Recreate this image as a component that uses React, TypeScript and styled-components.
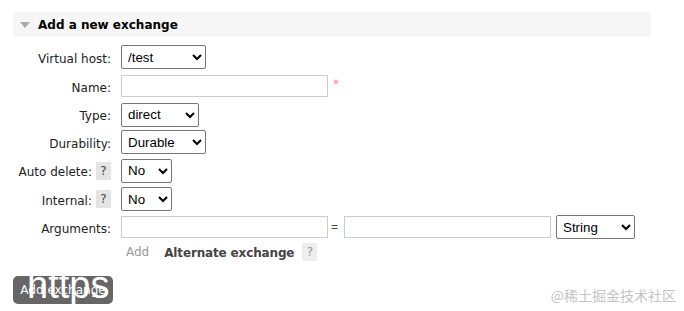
import React from 'react';
import styled, { createGlobalStyle } from 'styled-components';

const GlobalStyle = createGlobalStyle`
  html, body {
    margin: 0;
    padding: 0;
    background: #fff;
  }
  body {
    font-family: "DejaVu Sans", Verdana, sans-serif;
    font-size: 12px;
    color: #222;
  }
`;

const Page = styled.div`
  position: relative;
  width: 684px;
  height: 311px;
  padding: 12px 0 0 13px;
  box-sizing: border-box;
  overflow: hidden;
`;

const SectionHeader = styled.div`
  display: flex;
  align-items: center;
  gap: 8px;
  width: 638px;
  height: 25px;
  padding-left: 7px;
  box-sizing: border-box;
  background: #f6f6f6;
`;

const Arrow = styled.span`
  width: 0;
  height: 0;
  border-left: 5px solid transparent;
  border-right: 5px solid transparent;
  border-top: 6px solid #aaa;
  margin-top: 1px;
`;

const Title = styled.h2`
  margin: 0;
  font-size: 12px;
  font-weight: bold;
  color: #000;
`;

const Form = styled.div`
  display: flex;
  flex-direction: column;
  margin-top: 6px;
`;

const Row = styled.div<{ $height?: number }>`
  display: grid;
  grid-template-columns: 98px auto;
  column-gap: 10px;
  align-items: center;
  height: ${(p) => p.$height ?? 28}px;
`;

const Label = styled.label`
  display: flex;
  align-items: center;
  justify-content: flex-end;
  gap: 4px;
  padding-top: 3px;
  color: #222;
  white-space: nowrap;
`;

const Help = styled.span<{ $light?: boolean }>`
  display: inline-flex;
  align-items: center;
  justify-content: center;
  width: 15px;
  height: 18px;
  margin-top: -3px;
  background: ${(p) => (p.$light ? '#eee' : '#e4e4e4')};
  color: ${(p) => (p.$light ? '#999' : '#444')};
  font-weight: normal;
  font-size: 12px;
`;

const Controls = styled.div`
  display: flex;
  align-items: center;
  gap: 5px;
`;

const Select = styled.select<{ $width: number }>`
  width: ${(p) => p.$width}px;
  height: 24px;
  font-family: "Liberation Sans", Arial, sans-serif;
  font-size: 13.33px;
  color: #000;
  background: #fff;
  border: 1px solid #767676;
  border-radius: 2px;
  padding: 0 2px;
`;

const TextInput = styled.input`
  width: 207px;
  height: 22px;
  box-sizing: border-box;
  border: 1px solid #ccc;
  background: #fff;
  padding: 0 4px;
  font-family: "Liberation Sans", Arial, sans-serif;
`;

const Required = styled.span`
  color: #f88;
  font-size: 12px;
  align-self: flex-start;
  margin-top: 2px;
`;

const Equals = styled.span`
  font-family: "Liberation Sans", Arial, sans-serif;
  color: #444;
  font-size: 12px;
  margin-left: -2px;
  margin-right: 1px;
`;

const ArgsRow = styled.div`
  display: flex;
  align-items: center;
  gap: 15px;
  padding-left: 5px;
`;

const AddLink = styled.span`
  color: #999;
`;

const AltGroup = styled.span`
  display: flex;
  align-items: center;
  gap: 8px;
  font-weight: bold;
  color: #444;
  letter-spacing: -0.15px;
  padding-top: 2px;
`;

const SubmitButton = styled.button`
  position: relative;
  overflow: hidden;
  margin-top: 13px;
  width: 100px;
  height: 28px;
  background: #666;
  color: #fff;
  border: none;
  border-radius: 5px;
  font-family: "DejaVu Sans", Verdana, sans-serif;
  font-size: 12px;
  padding: 0;
`;

const ButtonText = styled.span`
  position: relative;
  z-index: 1;
`;

const Stamp = styled.span`
  position: absolute;
  left: 14px;
  top: -10px;
  font-family: "Liberation Sans", Arial, sans-serif;
  font-size: 38px;
  color: #fff;
  line-height: 1;
`;

const Watermark = styled.div`
  position: absolute;
  right: 8px;
  bottom: 6px;
  font-family: "Noto Sans CJK SC", sans-serif;
  font-size: 14px;
  color: #c4c4c4;
`;

const App = () => {
  return (
    <>
      <GlobalStyle />
      <Page>
        <SectionHeader>
          <Arrow />
          <Title>Add a new exchange</Title>
        </SectionHeader>
        <Form>
          <Row>
            <Label>Virtual host:</Label>
            <Controls>
              <Select $width={85} defaultValue="/test">
                <option>/test</option>
              </Select>
            </Controls>
          </Row>
          <Row $height={30}>
            <Label>Name:</Label>
            <Controls>
              <TextInput />
              <Required>*</Required>
            </Controls>
          </Row>
          <Row $height={27}>
            <Label>Type:</Label>
            <Controls>
              <Select $width={78} defaultValue="direct">
                <option>direct</option>
              </Select>
            </Controls>
          </Row>
          <Row>
            <Label>Durability:</Label>
            <Controls>
              <Select $width={85} defaultValue="Durable">
                <option>Durable</option>
              </Select>
            </Controls>
          </Row>
          <Row $height={29}>
            <Label>
              Auto delete: <Help>?</Help>
            </Label>
            <Controls>
              <Select $width={51} defaultValue="No">
                <option>No</option>
              </Select>
            </Controls>
          </Row>
          <Row>
            <Label>
              Internal: <Help>?</Help>
            </Label>
            <Controls>
              <Select $width={51} defaultValue="No">
                <option>No</option>
              </Select>
            </Controls>
          </Row>
          <Row>
            <Label>Arguments:</Label>
            <Controls>
              <TextInput />
              <Equals>=</Equals>
              <TextInput />
              <Select $width={79} defaultValue="String">
                <option>String</option>
              </Select>
            </Controls>
          </Row>
          <Row $height={22}>
            <span />
            <ArgsRow>
              <AddLink>Add</AddLink>
              <AltGroup>
                Alternate exchange <Help $light>?</Help>
              </AltGroup>
            </ArgsRow>
          </Row>
        </Form>
        <SubmitButton>
          <Stamp>https</Stamp>
          <ButtonText>Add exchange</ButtonText>
        </SubmitButton>
        <Watermark>@稀土掘金技术社区</Watermark>
      </Page>
    </>
  );
};

export default App;
